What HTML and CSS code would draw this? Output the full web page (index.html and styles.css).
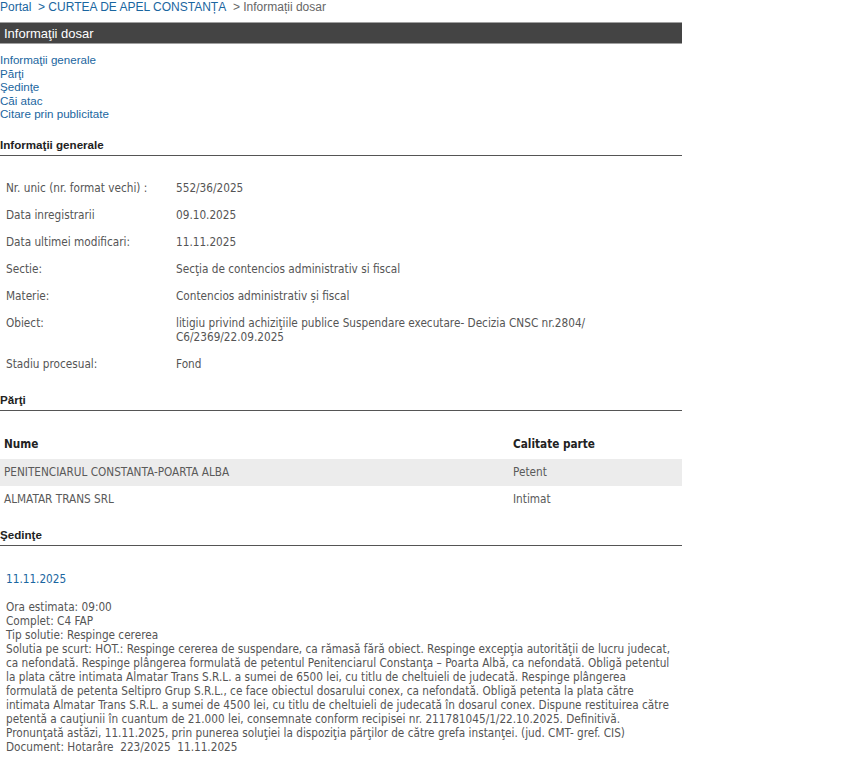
FILE: index.html
```html
<!DOCTYPE html>
<html lang="ro">
<head>
<meta charset="utf-8">
<title>Informaţii dosar</title>
<link rel="stylesheet" href="styles.css">
</head>
<body>
<div class="page">
  <div class="crumbs"><a href="#">Portal</a>&nbsp; <a href="#">&gt; CURTEA DE APEL CONSTANȚA</a>&nbsp; <span class="here">&gt; Informații dosar</span></div>
  <div class="bar">Informaţii dosar</div>
  <ul class="toc">
    <li><a href="#">Informaţii generale</a></li>
    <li><a href="#">Părţi</a></li>
    <li><a href="#">Şedinţe</a></li>
    <li><a href="#">Căi atac</a></li>
    <li><a href="#">Citare prin publicitate</a></li>
  </ul>

  <h2 class="sec">Informaţii generale</h2>
  <table class="info">
    <tr><td class="lbl">Nr. unic (nr. format vechi) :</td><td>552/36/2025</td></tr>
    <tr><td class="lbl">Data inregistrarii</td><td>09.10.2025</td></tr>
    <tr><td class="lbl">Data ultimei modificari:</td><td>11.11.2025</td></tr>
    <tr><td class="lbl">Sectie:</td><td>Secţia de contencios administrativ si fiscal</td></tr>
    <tr><td class="lbl">Materie:</td><td>Contencios administrativ și fiscal</td></tr>
    <tr><td class="lbl">Obiect:</td><td>litigiu privind achiziţiile publice Suspendare executare- Decizia CNSC nr.2804/ C6/2369/22.09.2025</td></tr>
    <tr><td class="lbl">Stadiu procesual:</td><td>Fond</td></tr>
  </table>

  <h2 class="sec sec-parti">Părţi</h2>
  <table class="parti">
    <thead><tr><th class="c1">Nume</th><th>Calitate parte</th></tr></thead>
    <tbody>
      <tr class="alt"><td>PENITENCIARUL CONSTANTA-POARTA ALBA</td><td>Petent</td></tr>
      <tr><td>ALMATAR TRANS SRL</td><td>Intimat</td></tr>
    </tbody>
  </table>

  <h2 class="sec sec-sed">Şedinţe</h2>
  <div class="sed">
    <div class="date">11.11.2025</div>
    <div class="det">Ora estimata: 09:00<br>
Complet: C4 FAP<br>
Tip solutie: Respinge cererea<br>
Solutia pe scurt: HOT.: Respinge cererea de suspendare, ca rămasă fără obiect. Respinge excepţia autorităţii de lucru judecat, ca nefondată. Respinge plângerea formulată de petentul Penitenciarul Constanţa – Poarta Albă, ca nefondată. Obligă petentul la plata către intimata Almatar Trans S.R.L. a sumei de 6500 lei, cu titlu de cheltuieli de judecată. Respinge plângerea formulată de petenta Seltipro Grup S.R.L., ce face obiectul dosarului conex, ca nefondată. Obligă petenta la plata către intimata Almatar Trans S.R.L. a sumei de 4500 lei, cu titlu de cheltuieli de judecată în dosarul conex. Dispune restituirea către petentă a cauţiunii în cuantum de 21.000 lei, consemnate conform recipisei nr. 211781045/1/22.10.2025. Definitivă. Pronunţată astăzi, 11.11.2025, prin punerea soluţiei la dispoziţia părţilor de către grefa instanţei. (jud. CMT- gref. CIS)<br>
Document: Hotarâre&nbsp; 223/2025&nbsp; 11.11.2025</div>
  </div>
</div>
</body>
</html>
```

FILE: styles.css
```css
html, body {
  margin: 0;
  padding: 0;
  background: #fff;
}
body {
  font-family: "Liberation Sans", Arial, sans-serif;
  font-size: 12px;
  color: #555;
}
a {
  color: #1a66a0;
  text-decoration: none;
}
.page {
  width: 682px;
}
.crumbs {
  height: 14px;
  line-height: 14px;
  font-size: 12px;
  color: #666;
}
.crumbs a { color: #1a66a0; }
.crumbs .here { color: #666; }
.bar {
  margin-top: 8px;
  height: 20px;
  line-height: 22px;
  background: #444;
  border-top: 1px solid #a0a0a0;
  border-bottom: 1px solid #a0a0a0;
  color: #fff;
  font-size: 13px;
  padding-left: 4px;
}
.toc {
  list-style: none;
  margin: 9px 0 0;
  padding: 0;
  font-size: 11.6px;
  line-height: 13.5px;
}
.sec {
  margin: 17px 0 0;
  font-size: 11.6px;
  font-weight: bold;
  color: #222;
  line-height: 14px;
  padding-bottom: 3px;
  border-bottom: 1px solid #555;
}
.info, .parti {
  width: 682px;
  border-collapse: collapse;
  font-family: "DejaVu Sans Condensed", "DejaVu Sans", sans-serif;
  font-size: 11.7px;
  color: #555;
}
.info {
  margin-top: 18px;
}
.info td {
  padding: 7px 6px 6px;
  vertical-align: top;
  line-height: 14px;
}
.info td.lbl { width: 158px; }
.sec-parti { margin-top: 16px; }
.parti {
  margin-top: 20px;
}
.parti th {
  text-align: left;
  font-weight: bold;
  color: #222;
  padding: 6px 4px 8px;
  line-height: 14px;
}
.parti th.c1 { width: 501px; }
.parti td {
  padding: 6px 4px;
  line-height: 15px;
  color: #5a5a5a;
}
.parti tr.alt td { background: #ececec; }
.sec-sed { margin-top: 15px; }
.sed {
  font-family: "DejaVu Sans Condensed", "DejaVu Sans", sans-serif;
  font-size: 11.7px;
  padding: 0 6px;
}
.date {
  color: #1a66a0;
  margin-top: 26px;
  line-height: 14px;
}
.det {
  margin-top: 14px;
  line-height: 14.1px;
  color: #555;
}
```
